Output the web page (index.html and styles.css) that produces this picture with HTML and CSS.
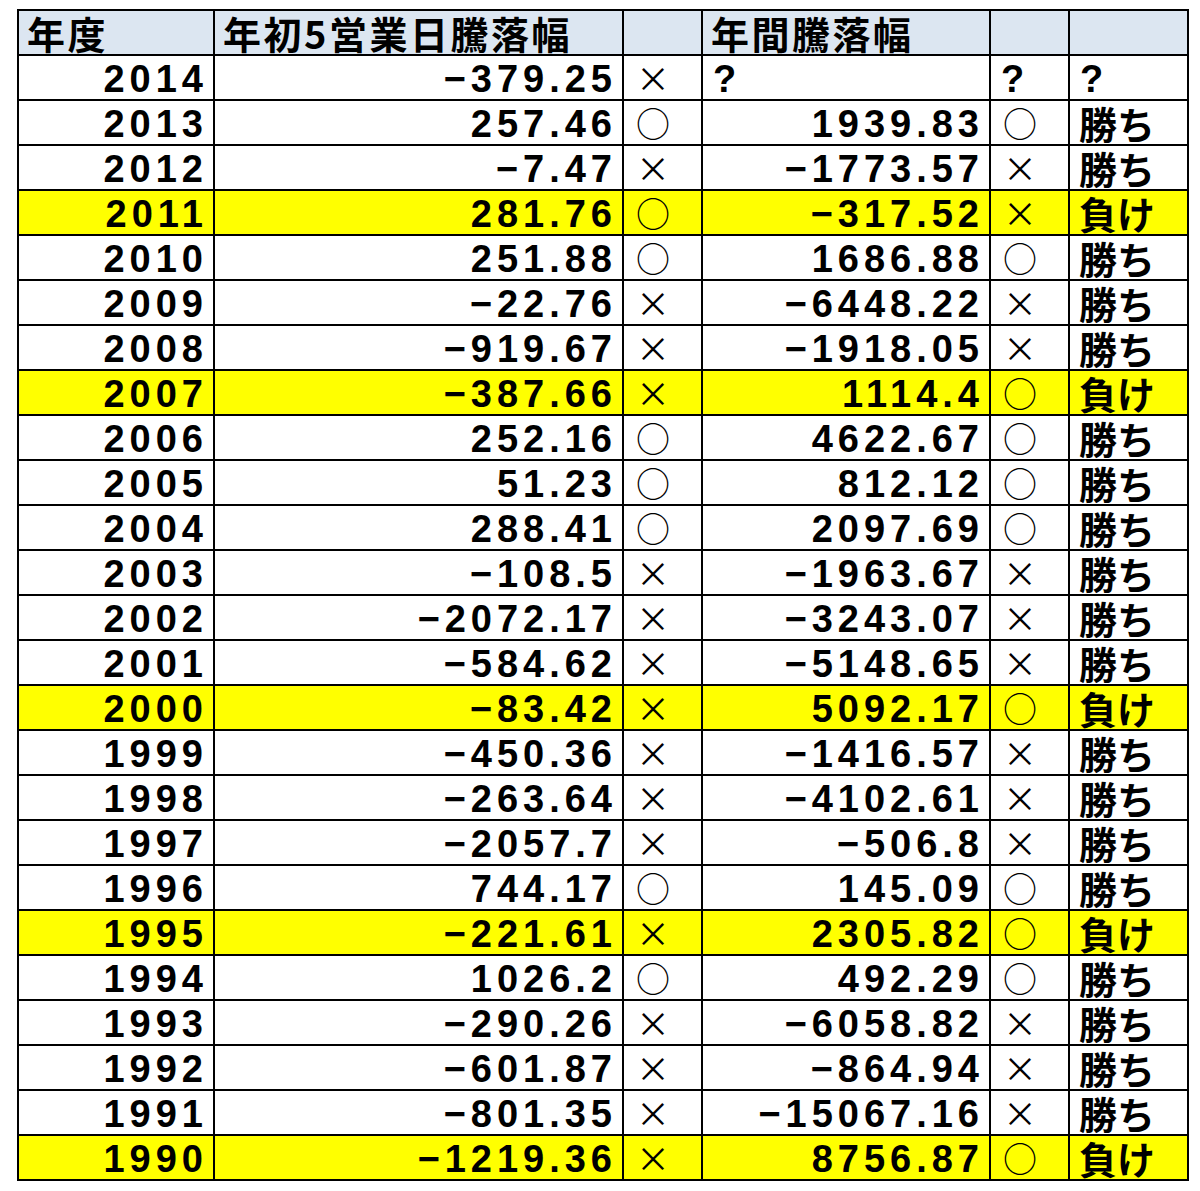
FILE: index.html
```html
<!DOCTYPE html>
<html lang="ja">
<head>
<meta charset="utf-8">
<title>年初5営業日騰落幅</title>
<link rel="stylesheet" href="styles.css">
</head>
<body>
<table class="sheet">
<colgroup>
<col class="c-year"><col class="c-first"><col class="c-mark"><col class="c-annual"><col class="c-mark2"><col class="c-result">
</colgroup>
<thead>
<tr><th class="h">年度</th><th class="h">年初5営業日騰落幅</th><th class="h"></th><th class="h">年間騰落幅</th><th class="h"></th><th class="h"></th></tr>
</thead>
<tbody>
<tr><td class="num">2014</td><td class="num">−379.25</td><td class="mk">×</td><td class="q">?</td><td class="q">?</td><td class="q">?</td></tr>
<tr><td class="num">2013</td><td class="num">257.46</td><td class="mk">○</td><td class="num">1939.83</td><td class="mk">○</td><td class="txt">勝ち</td></tr>
<tr><td class="num">2012</td><td class="num">−7.47</td><td class="mk">×</td><td class="num">−1773.57</td><td class="mk">×</td><td class="txt">勝ち</td></tr>
<tr class="hl"><td class="num">2011</td><td class="num">281.76</td><td class="mk">○</td><td class="num">−317.52</td><td class="mk">×</td><td class="txt">負け</td></tr>
<tr><td class="num">2010</td><td class="num">251.88</td><td class="mk">○</td><td class="num">1686.88</td><td class="mk">○</td><td class="txt">勝ち</td></tr>
<tr><td class="num">2009</td><td class="num">−22.76</td><td class="mk">×</td><td class="num">−6448.22</td><td class="mk">×</td><td class="txt">勝ち</td></tr>
<tr><td class="num">2008</td><td class="num">−919.67</td><td class="mk">×</td><td class="num">−1918.05</td><td class="mk">×</td><td class="txt">勝ち</td></tr>
<tr class="hl"><td class="num">2007</td><td class="num">−387.66</td><td class="mk">×</td><td class="num">1114.4</td><td class="mk">○</td><td class="txt">負け</td></tr>
<tr><td class="num">2006</td><td class="num">252.16</td><td class="mk">○</td><td class="num">4622.67</td><td class="mk">○</td><td class="txt">勝ち</td></tr>
<tr><td class="num">2005</td><td class="num">51.23</td><td class="mk">○</td><td class="num">812.12</td><td class="mk">○</td><td class="txt">勝ち</td></tr>
<tr><td class="num">2004</td><td class="num">288.41</td><td class="mk">○</td><td class="num">2097.69</td><td class="mk">○</td><td class="txt">勝ち</td></tr>
<tr><td class="num">2003</td><td class="num">−108.5</td><td class="mk">×</td><td class="num">−1963.67</td><td class="mk">×</td><td class="txt">勝ち</td></tr>
<tr><td class="num">2002</td><td class="num">−2072.17</td><td class="mk">×</td><td class="num">−3243.07</td><td class="mk">×</td><td class="txt">勝ち</td></tr>
<tr><td class="num">2001</td><td class="num">−584.62</td><td class="mk">×</td><td class="num">−5148.65</td><td class="mk">×</td><td class="txt">勝ち</td></tr>
<tr class="hl"><td class="num">2000</td><td class="num">−83.42</td><td class="mk">×</td><td class="num">5092.17</td><td class="mk">○</td><td class="txt">負け</td></tr>
<tr><td class="num">1999</td><td class="num">−450.36</td><td class="mk">×</td><td class="num">−1416.57</td><td class="mk">×</td><td class="txt">勝ち</td></tr>
<tr><td class="num">1998</td><td class="num">−263.64</td><td class="mk">×</td><td class="num">−4102.61</td><td class="mk">×</td><td class="txt">勝ち</td></tr>
<tr><td class="num">1997</td><td class="num">−2057.7</td><td class="mk">×</td><td class="num">−506.8</td><td class="mk">×</td><td class="txt">勝ち</td></tr>
<tr><td class="num">1996</td><td class="num">744.17</td><td class="mk">○</td><td class="num">145.09</td><td class="mk">○</td><td class="txt">勝ち</td></tr>
<tr class="hl"><td class="num">1995</td><td class="num">−221.61</td><td class="mk">×</td><td class="num">2305.82</td><td class="mk">○</td><td class="txt">負け</td></tr>
<tr><td class="num">1994</td><td class="num">1026.2</td><td class="mk">○</td><td class="num">492.29</td><td class="mk">○</td><td class="txt">勝ち</td></tr>
<tr><td class="num">1993</td><td class="num">−290.26</td><td class="mk">×</td><td class="num">−6058.82</td><td class="mk">×</td><td class="txt">勝ち</td></tr>
<tr><td class="num">1992</td><td class="num">−601.87</td><td class="mk">×</td><td class="num">−864.94</td><td class="mk">×</td><td class="txt">勝ち</td></tr>
<tr><td class="num">1991</td><td class="num">−801.35</td><td class="mk">×</td><td class="num">−15067.16</td><td class="mk">×</td><td class="txt">勝ち</td></tr>
<tr class="hl"><td class="num">1990</td><td class="num">−1219.36</td><td class="mk">×</td><td class="num">8756.87</td><td class="mk">○</td><td class="txt">負け</td></tr>
</tbody>
</table>
</body>
</html>
```

FILE: styles.css
```css
html, body {
  margin: 0;
  padding: 0;
  background: #ffffff;
}
body {
  padding: 9px 0 0 17px;
  font-family: "Noto Sans CJK JP", "Noto Sans", sans-serif;
  color: #000;
}
.sheet {
  border-collapse: collapse;
  table-layout: fixed;
  width: 1170px;
}
.c-year { width: 196px; }
.c-first { width: 409px; }
.c-mark { width: 79px; }
.c-annual { width: 288px; }
.c-mark2 { width: 79px; }
.c-result { width: 119px; }
.sheet th, .sheet td {
  border: 2px solid #000;
  box-sizing: border-box;
  height: 45px;
  padding: 0;
  white-space: nowrap;
  line-height: 40px;
  vertical-align: middle;
}
.sheet th {
  background: #dce6f1;
  text-align: left;
  font-weight: 700;
  font-size: 38px;
  padding-left: 8px;
  letter-spacing: 2.5px;
  line-height: 40px;
  padding-top: 1px;
}
.hl td {
  background: #ffff00;
}
.sheet .num {
  font-family: "Liberation Sans", Arial, sans-serif;
  text-align: right;
  font-weight: 700;
  font-size: 38px;
  letter-spacing: 5px;
  padding-right: 5px;
  padding-top: 3px;
}
.sheet .q {
  font-family: "Liberation Sans", Arial, sans-serif;
  text-align: left;
  font-weight: 700;
  font-size: 38px;
  padding-left: 10px;
  padding-top: 3px;
}
.sheet .mk {
  text-align: left;
  font-size: 34px;
  font-weight: 400;
  padding-left: 12px;
}
.sheet .txt {
  text-align: left;
  font-weight: 700;
  font-size: 38px;
  padding-left: 9px;
  padding-top: 1px;
}
```
